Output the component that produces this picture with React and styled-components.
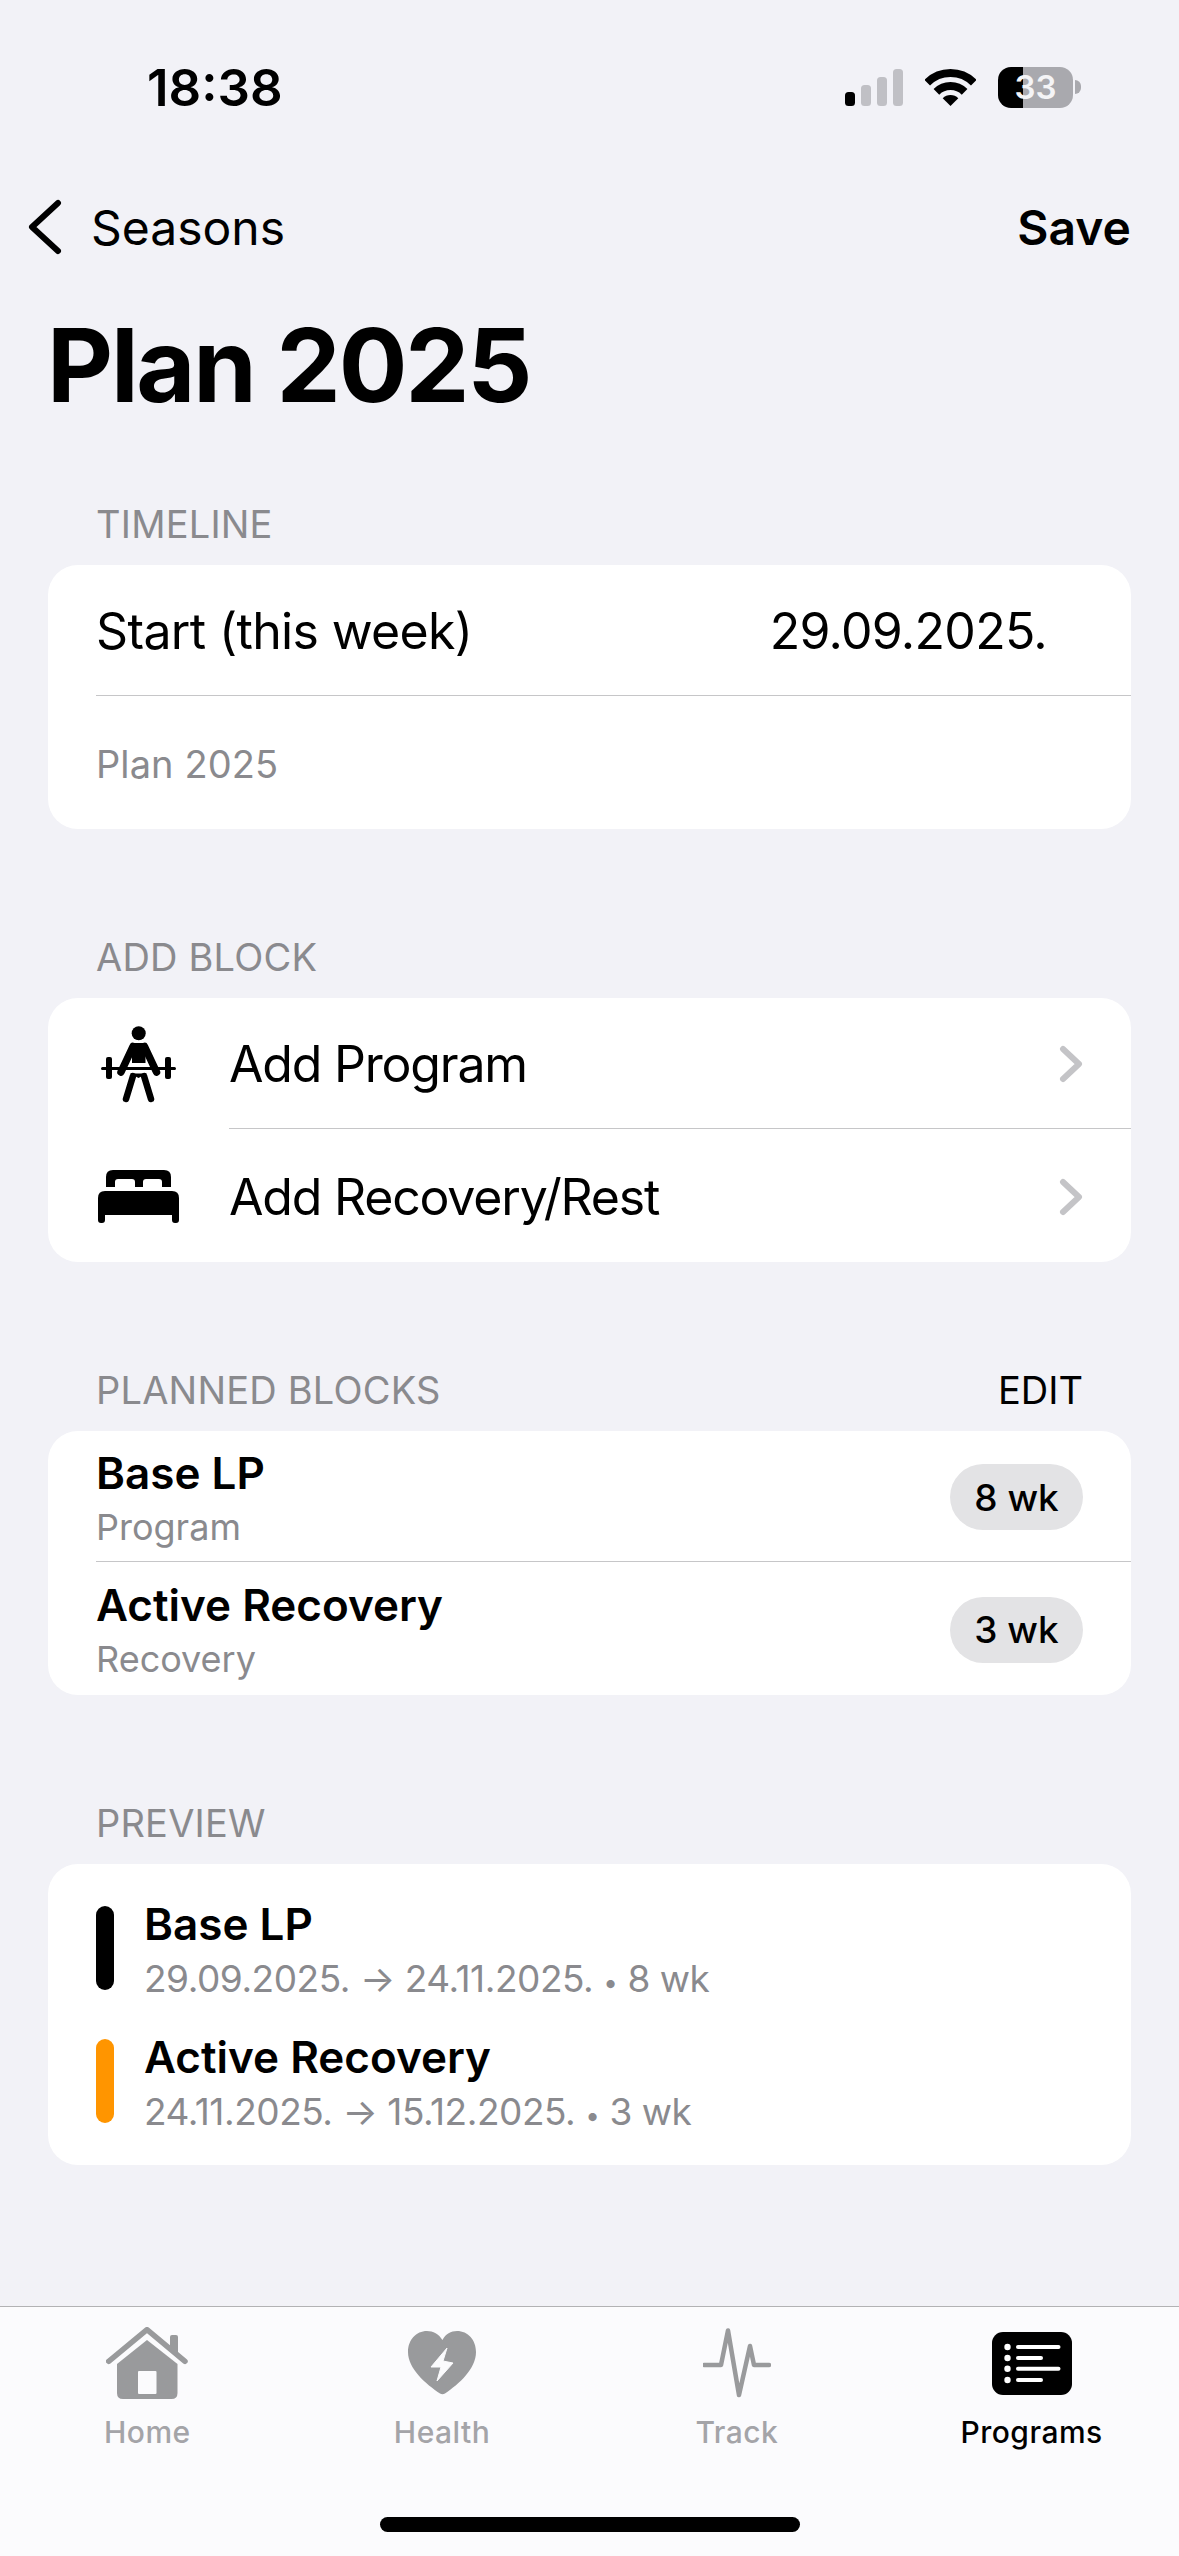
import React from 'react';
import styled, { createGlobalStyle } from 'styled-components';

const GlobalStyle = createGlobalStyle`
  html, body {
    margin: 0;
    padding: 0;
    background: #f2f2f7;
  }
  * {
    box-sizing: border-box;
  }
`;

const Page = styled.div`
  width: 1179px;
  height: 2556px;
  overflow: hidden;
  display: flex;
  flex-direction: column;
  background: #f2f2f7;
  color: #000;
  font-family: Inter, "Liberation Sans", sans-serif;
`;

const StatusBar = styled.div`
  height: 174px;
  display: flex;
  align-items: center;
  justify-content: space-between;
  padding: 0 98px 0 147px;
`;

const Time = styled.div`
  font-size: 51px;
  font-weight: 600;
`;

const StatusIcons = styled.div`
  display: flex;
  align-items: center;
`;

const Battery = styled.div`
  width: 75px;
  height: 41px;
  margin-left: 22px;
  border-radius: 13px;
  background: linear-gradient(90deg, #000 25px, #a9a9ae 25px);
  color: #f4f4f6;
  font-size: 33px;
  font-weight: 600;
  line-height: 41px;
  text-align: center;
`;

const BatteryTip = styled.div`
  width: 6px;
  height: 14px;
  margin-left: 2px;
  border-radius: 0 7px 7px 0;
  background: #a9a9ae;
`;

const NavRow = styled.div`
  height: 106px;
  display: flex;
  align-items: center;
  justify-content: space-between;
  padding: 0 48px 0 28px;
`;

const BackLink = styled.div`
  display: flex;
  align-items: center;
  gap: 29px;
  font-size: 48px;
`;

const SaveLink = styled.div`
  font-size: 48px;
  font-weight: 600;
`;

const Title = styled.h1`
  margin: 34px 0 0;
  padding: 0 47px;
  font-size: 102px;
  line-height: 102px;
  font-weight: 700;
  letter-spacing: -2.2px;
`;

const Main = styled.div`
  margin-top: 85px;
  padding: 0 48px;
  display: flex;
  flex-direction: column;
  gap: 105px;
`;

const SectionHead = styled.div`
  height: 46px;
  margin-bottom: 18px;
  padding: 0 48px;
  display: flex;
  align-items: center;
  justify-content: space-between;
  font-size: 38px;
  letter-spacing: 0.2px;
  color: #8a8a8e;
`;

const EditLink = styled.span`
  color: #000;
  letter-spacing: 0;
`;

const Card = styled.div`
  background: #fff;
  border-radius: 30px;
  overflow: hidden;
`;

const Row = styled.div`
  height: ${(p) => (p.$divider ? 131 : 133)}px;
  margin-left: 48px;
  padding: 2px 48px 0 0;
  display: flex;
  align-items: center;
  justify-content: space-between;
  border-bottom: ${(p) => (p.$divider ? '1.5px solid #c6c6c8' : 'none')};
`;

const RowText = styled.div`
  font-size: 50px;
  letter-spacing: -0.65px;
`;

const ActionText = styled(RowText)`
  letter-spacing: -1.2px;
`;

const DateValue = styled.div`
  margin-right: 36px;
  font-size: 50px;
  letter-spacing: -0.7px;
`;

const NameCaption = styled.div`
  font-size: 38px;
  letter-spacing: 0.1px;
  color: #8a8a8e;
`;

const IconSlot = styled.div`
  position: absolute;
  left: -131px;
  width: 81px;
  display: flex;
  justify-content: center;
`;

const ActionRow = styled(Row)`
  position: relative;
  margin-left: 181px;
`;

const BlockText = styled.div`
  margin-top: 3px;
  display: flex;
  flex-direction: column;
  gap: 8px;
`;

const BlockName = styled.div`
  font-size: 44px;
  line-height: 48px;
  font-weight: 600;
`;

const BlockKind = styled.div`
  font-size: 36px;
  line-height: 44px;
  color: #8a8a8e;
`;

const Pill = styled.div`
  width: 133px;
  height: 66px;
  border-radius: 33px;
  background: #e3e3e5;
  display: flex;
  align-items: center;
  justify-content: center;
  font-size: 37px;
  font-weight: 500;
`;

const PreviewCard = styled(Card)`
  padding: 42px 48px;
  display: flex;
  flex-direction: column;
  gap: 49px;
`;

const PreviewItem = styled.div`
  height: 84px;
  display: flex;
  gap: 30px;
`;

const ColorBar = styled.div`
  width: 18px;
  border-radius: 9px;
  background: ${(p) => p.$color};
`;

const PreviewText = styled.div`
  margin: -4px 0 -15px;
  display: flex;
  flex-direction: column;
  justify-content: space-between;
`;

const PreviewName = styled(BlockName)`
  line-height: 44px;
`;

const PreviewDates = styled.div`
  font-size: 37px;
  line-height: 44px;
  letter-spacing: -0.45px;
  color: #8a8a8e;
`;

const Dot = styled.span`
  font-size: 26px;
`;

const TabBar = styled.div`
  margin-top: auto;
  height: 250px;
  padding-top: 19px;
  border-top: 1.5px solid #b2b2b4;
  background: #fbfbfd;
  display: flex;
  flex-direction: column;
  align-items: center;
`;

const TabGrid = styled.div`
  width: 100%;
  display: grid;
  grid-template-columns: repeat(4, 1fr);
`;

const Tab = styled.div`
  display: flex;
  flex-direction: column;
  align-items: center;
  font-size: 30px;
  font-weight: 500;
  letter-spacing: 0.5px;
  color: ${(p) => (p.$active ? '#000' : '#a4a4a8')};
`;

const TabIcon = styled.div`
  height: 74px;
  margin-bottom: 12px;
  display: flex;
  align-items: center;
`;

const TabLabel = styled.div`
  height: 40px;
  line-height: 40px;
`;

const HomeIndicator = styled.div`
  width: 420px;
  height: 15px;
  margin-top: 65px;
  border-radius: 8px;
  background: #000;
`;

const SignalIcon = () => (
  <svg width="58" height="37" viewBox="0 0 58 37">
    <rect x="0" y="23" width="10" height="14" rx="3.5" fill="#000" />
    <rect x="16" y="16" width="10" height="21" rx="3.5" fill="#c0c0c5" />
    <rect x="32" y="8" width="10" height="29" rx="3.5" fill="#c0c0c5" />
    <rect x="48" y="0" width="10" height="37" rx="3.5" fill="#c0c0c5" />
  </svg>
);

const WifiIcon = () => (
  <svg width="51" height="37" viewBox="0 0 51 37" style={{ marginLeft: 22 }}>
    <path d="M2.2 13.7A33 33 0 0 1 48.8 13.7" fill="none" stroke="#000" strokeWidth="8" />
    <path d="M11.4 22.9A20 20 0 0 1 39.6 22.9" fill="none" stroke="#000" strokeWidth="8" />
    <path d="M25.5 37L17.7 29.2A11 11 0 0 1 33.3 29.2Z" fill="#000" />
  </svg>
);

const BackChevron = () => (
  <svg width="34" height="56" viewBox="0 0 34 56">
    <path d="M30 4L4 28L30 52" fill="none" stroke="#000" strokeWidth="6" strokeLinecap="round" strokeLinejoin="round" />
  </svg>
);

const RowChevron = () => (
  <svg width="25" height="38" viewBox="0 0 25 38">
    <path d="M5 4L21 19L5 34" fill="none" stroke="#c4c4c7" strokeWidth="6" strokeLinecap="round" strokeLinejoin="round" />
  </svg>
);

const LifterIcon = () => (
  <svg width="75" height="77" viewBox="0 0 75 77">
    <circle cx="37.7" cy="7.3" r="7" fill="#000" />
    <path d="M31 17H44.5V37H31Z" fill="#000" />
    <path d="M32 20.5L20 46M43.5 20.5L55.5 46" stroke="#000" strokeWidth="7.5" strokeLinecap="round" fill="none" />
    <rect x="0" y="41" width="75" height="3" rx="1.5" fill="#000" />
    <rect x="5" y="31" width="6" height="22" rx="2" fill="#000" />
    <rect x="64" y="31" width="6" height="22" rx="2" fill="#000" />
    <path d="M29 47.5H46L37.5 52Z" fill="#000" />
    <path d="M32 50L25 73M43 50L50 73" stroke="#000" strokeWidth="6.5" strokeLinecap="round" fill="none" />
  </svg>
);

const BedIcon = () => (
  <svg width="81" height="53" viewBox="0 0 81 53">
    <path d="M8 17V7Q8 0 15 0H66Q73 0 73 7V17H64V12Q64 9 61 9H48Q45 9 45 12V17H37V12Q37 9 34 9H20Q17 9 17 12V17Z" fill="#000" />
    <path d="M0 28Q0 21 7 21H74Q81 21 81 28V50Q81 53 78 53H77Q74 53 74 50V45H7V50Q7 53 4 53H3Q0 53 0 50Z" fill="#000" />
  </svg>
);

const HomeIcon = () => (
  <svg width="82" height="72" viewBox="0 0 82 72">
    <path d="M41 13L71.5 37V66Q71.5 72 65.5 72H17Q11 72 11 66V37Z" fill="#999a9c" />
    <rect x="32" y="44" width="18.5" height="23" rx="1" fill="#fbfbfd" />
    <path d="M2.7 34.3L41 2.7L79 34.3" fill="none" stroke="#999a9c" strokeWidth="5.5" strokeLinecap="round" strokeLinejoin="round" />
    <path d="M64 22V10Q64 8 66 8H70Q72 8 72 10V28Z" fill="#999a9c" />
  </svg>
);

const HeartIcon = () => (
  <svg width="68" height="64" viewBox="0 0 68 64">
    <path d="M34.4 9C31 3 25 0 19 0C8 0 0 9 0 21C0 38 18 53 32 62.5Q34.4 64 37 62.5C51 53 68 38 68 21C68 9 60 0 49 0C43 0 37.5 3 34.4 9Z" fill="#999a9c" />
    <path d="M39 17L23 36L33 36L29 50L45 32L35 30Z" fill="#fbfbfd" stroke="#fbfbfd" strokeWidth="1" strokeLinejoin="round" />
  </svg>
);

const PulseIcon = () => (
  <svg width="68" height="70" viewBox="0 0 68 70">
    <path d="M1 37H18L25 2.5L36 67L47 18L51 37H66" fill="none" stroke="#999a9c" strokeWidth="4.5" strokeLinecap="round" strokeLinejoin="round" />
  </svg>
);

const ProgramsIcon = () => (
  <svg width="80" height="63" viewBox="0 0 80 63">
    <rect width="80" height="63" rx="11" fill="#000" />
    {[15, 26, 36.7, 48].map((y, i) => (
      <g key={y}>
        <circle cx="15.5" cy={y} r="3.2" fill="#fff" />
        <line x1="26" x2={i % 2 ? 49 : 66.5} y1={y} y2={y} stroke="#fff" strokeWidth="4" strokeLinecap="round" />
      </g>
    ))}
  </svg>
);

const App = () => (
  <Page>
    <GlobalStyle />
    <StatusBar>
      <Time>18:38</Time>
      <StatusIcons>
        <SignalIcon />
        <WifiIcon />
        <Battery>33</Battery>
        <BatteryTip />
      </StatusIcons>
    </StatusBar>

    <NavRow>
      <BackLink>
        <BackChevron />
        Seasons
      </BackLink>
      <SaveLink>Save</SaveLink>
    </NavRow>

    <Title>Plan 2025</Title>

    <Main>
      <section>
        <SectionHead>TIMELINE</SectionHead>
        <Card>
          <Row $divider>
            <RowText>Start (this week)</RowText>
            <DateValue>29.09.2025.</DateValue>
          </Row>
          <Row>
            <NameCaption>Plan 2025</NameCaption>
          </Row>
        </Card>
      </section>

      <section>
        <SectionHead>ADD BLOCK</SectionHead>
        <Card>
          <ActionRow $divider>
            <IconSlot><LifterIcon /></IconSlot>
            <ActionText>Add Program</ActionText>
            <RowChevron />
          </ActionRow>
          <ActionRow>
            <IconSlot><BedIcon /></IconSlot>
            <ActionText>Add Recovery/Rest</ActionText>
            <RowChevron />
          </ActionRow>
        </Card>
      </section>

      <section>
        <SectionHead>
          PLANNED BLOCKS
          <EditLink>EDIT</EditLink>
        </SectionHead>
        <Card>
          <Row $divider>
            <BlockText>
              <BlockName>Base LP</BlockName>
              <BlockKind>Program</BlockKind>
            </BlockText>
            <Pill>8 wk</Pill>
          </Row>
          <Row>
            <BlockText>
              <BlockName>Active Recovery</BlockName>
              <BlockKind>Recovery</BlockKind>
            </BlockText>
            <Pill>3 wk</Pill>
          </Row>
        </Card>
      </section>

      <section>
        <SectionHead>PREVIEW</SectionHead>
        <PreviewCard>
          <PreviewItem>
            <ColorBar $color="#000" />
            <PreviewText>
              <PreviewName>Base LP</PreviewName>
              <PreviewDates>29.09.2025. → 24.11.2025. <Dot>•</Dot> 8 wk</PreviewDates>
            </PreviewText>
          </PreviewItem>
          <PreviewItem>
            <ColorBar $color="#ff9500" />
            <PreviewText>
              <PreviewName>Active Recovery</PreviewName>
              <PreviewDates>24.11.2025. → 15.12.2025. <Dot>•</Dot> 3 wk</PreviewDates>
            </PreviewText>
          </PreviewItem>
        </PreviewCard>
      </section>
    </Main>

    <TabBar>
      <TabGrid>
        <Tab>
          <TabIcon><HomeIcon /></TabIcon>
          <TabLabel>Home</TabLabel>
        </Tab>
        <Tab>
          <TabIcon><HeartIcon /></TabIcon>
          <TabLabel>Health</TabLabel>
        </Tab>
        <Tab>
          <TabIcon><PulseIcon /></TabIcon>
          <TabLabel>Track</TabLabel>
        </Tab>
        <Tab $active>
          <TabIcon><ProgramsIcon /></TabIcon>
          <TabLabel>Programs</TabLabel>
        </Tab>
      </TabGrid>
      <HomeIndicator />
    </TabBar>
  </Page>
);

export default App;
